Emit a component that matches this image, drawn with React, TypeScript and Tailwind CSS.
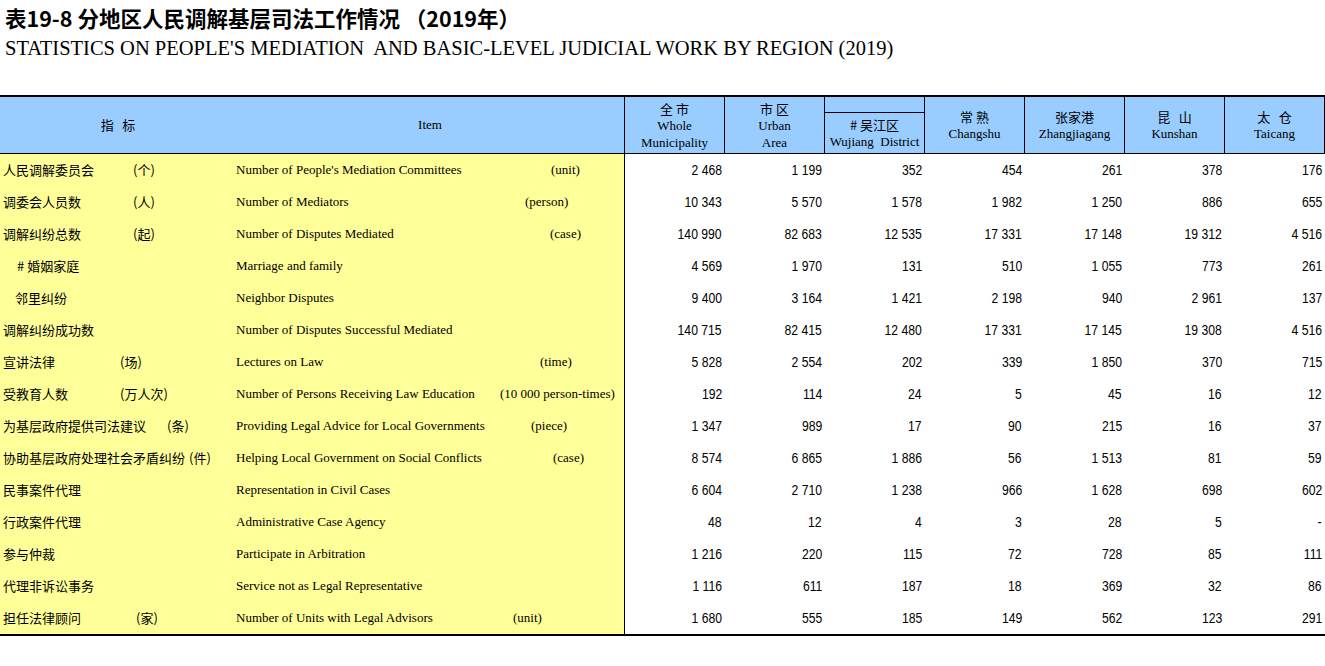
import React from 'react';

type Row = {
    cn: string;
    cnUnit?: string;
    cnW?: string;
    indent?: string;
    en: string;
    enUnit?: string;
    enW?: string;
    values: string[];
};

const rows: Row[] = [
    { cn: '人民调解委员会', cnUnit: '(个)', cnW: 'w-[130px]', en: "Number of People's Mediation Committees", enUnit: '(unit)', enW: 'w-[315px]', values: ['2 468', '1 199', '352', '454', '261', '378', '176'] },
    { cn: '调委会人员数', cnUnit: '(人)', cnW: 'w-[130px]', en: 'Number of Mediators', enUnit: '(person)', enW: 'w-[289px]', values: ['10 343', '5 570', '1 578', '1 982', '1 250', '886', '655'] },
    { cn: '调解纠纷总数', cnUnit: '(起)', cnW: 'w-[130px]', en: 'Number of Disputes Mediated', enUnit: '(case)', enW: 'w-[314px]', values: ['140 990', '82 683', '12 535', '17 331', '17 148', '19 312', '4 516'] },
    { cn: '# 婚姻家庭', indent: 'pl-[17px]', en: 'Marriage and family', values: ['4 569', '1 970', '131', '510', '1 055', '773', '261'] },
    { cn: '邻里纠纷', indent: 'pl-[15px]', en: 'Neighbor Disputes', values: ['9 400', '3 164', '1 421', '2 198', '940', '2 961', '137'] },
    { cn: '调解纠纷成功数', en: 'Number of Disputes Successful Mediated', values: ['140 715', '82 415', '12 480', '17 331', '17 145', '19 308', '4 516'] },
    { cn: '宣讲法律', cnUnit: '(场)', cnW: 'w-[117px]', en: 'Lectures on Law', enUnit: '(time)', enW: 'w-[304px]', values: ['5 828', '2 554', '202', '339', '1 850', '370', '715'] },
    { cn: '受教育人数', cnUnit: '(万人次)', cnW: 'w-[117px]', en: 'Number of Persons Receiving Law Education', enUnit: '(10 000 person-times)', enW: 'w-[264px]', values: ['192', '114', '24', '5', '45', '16', '12'] },
    { cn: '为基层政府提供司法建议', cnUnit: '(条)', cnW: 'w-[164px]', en: 'Providing Legal Advice for Local Governments', enUnit: '(piece)', enW: 'w-[295px]', values: ['1 347', '989', '17', '90', '215', '16', '37'] },
    { cn: '协助基层政府处理社会矛盾纠纷', cnUnit: '(件)', cnW: 'w-[186px]', en: 'Helping Local Government on Social Conflicts', enUnit: '(case)', enW: 'w-[317px]', values: ['8 574', '6 865', '1 886', '56', '1 513', '81', '59'] },
    { cn: '民事案件代理', en: 'Representation in Civil Cases', values: ['6 604', '2 710', '1 238', '966', '1 628', '698', '602'] },
    { cn: '行政案件代理', en: 'Administrative Case Agency', values: ['48', '12', '4', '3', '28', '5', '-'] },
    { cn: '参与仲裁', en: 'Participate in Arbitration', values: ['1 216', '220', '115', '72', '728', '85', '111'] },
    { cn: '代理非诉讼事务', en: 'Service not as Legal Representative', values: ['1 116', '611', '187', '18', '369', '32', '86'] },
    { cn: '担任法律顾问', cnUnit: '(家)', cnW: 'w-[133px]', en: 'Number of Units with Legal Advisors', enUnit: '(unit)', enW: 'w-[277px]', values: ['1 680', '555', '185', '149', '562', '123', '291'] },
];

const cjk = "font-['Noto_Sans_CJK_SC',sans-serif]";
const serif = "font-['Liberation_Serif','Noto_Sans_CJK_SC',serif]";
const sans = "font-['Liberation_Sans',sans-serif]";

function HeadCell({ cn, en }: { cn: string; en: string[] }) {
    return (
        <div className="w-[100px] shrink-0 border-r border-black flex flex-col items-center justify-center leading-[17px] text-[13px]">
            <div className={`${cjk} whitespace-pre`}>{cn}</div>
            {en.map(line => (
                <div key={line} className={serif}>{line}</div>
            ))}
        </div>
    );
}

export default function App() {
    return (
        <div className="w-[1325px] h-[666px] bg-white overflow-hidden text-black">
            {/* Titles */}
            <div className={`pl-[5px] pt-[8px] text-[21.5px] leading-[20px] font-bold whitespace-pre ${cjk}`}>
                {'表19-8 分地区人民调解基层司法工作情况 （2019年）'}
            </div>
            <div className={`pl-[5px] mt-[10px] text-[20.5px] leading-[20px] whitespace-pre ${serif}`}>
                {"STATISTICS ON PEOPLE'S MEDIATION  AND BASIC-LEVEL JUDICIAL WORK BY REGION (2019)"}
            </div>

            {/* Table */}
            <div className="mt-[37px] w-[1325px] border-t-2 border-b-2 border-black">
                {/* Header */}
                <div className="flex h-[57px] bg-[#99CCFF] border-b border-black">
                    <div className="w-[625px] shrink-0 flex border-r border-black text-[13px]">
                        <div className={`w-[236px] flex items-center justify-center whitespace-pre ${cjk}`}>{'指   标'}</div>
                        <div className={`flex-1 flex items-center justify-center ${serif}`}>Item</div>
                    </div>
                    <HeadCell cn="全 市" en={['Whole', 'Municipality']} />
                    <HeadCell cn="市 区" en={['Urban', 'Area']} />
                    <div className="w-[100px] shrink-0 border-r border-black flex flex-col">
                        <div className="h-[16px] border-b border-black" />
                        <div className="flex-1 flex flex-col items-center justify-center leading-[17px] text-[13px]">
                            <div className={cjk}># 吴江区</div>
                            <div className={`${serif} whitespace-pre`}>Wujiang  District</div>
                        </div>
                    </div>
                    <HeadCell cn="常 熟" en={['Changshu']} />
                    <HeadCell cn="张家港" en={['Zhangjiagang']} />
                    <HeadCell cn="昆   山" en={['Kunshan']} />
                    <HeadCell cn="太   仓" en={['Taicang']} />
                </div>

                {/* Body */}
                {rows.map(r => (
                    <div key={r.cn} className="flex h-[32px]">
                        <div className="w-[625px] shrink-0 flex items-center bg-[#FFFF99] border-r border-black text-[13px] whitespace-nowrap">
                            <div className={`w-[236px] shrink-0 flex items-center pl-[3px] ${r.indent ?? ''} ${cjk}`}>
                                <span className={`${r.cnW ?? ''} shrink-0`}>{r.cn}</span>
                                {r.cnUnit && <span>{r.cnUnit}</span>}
                            </div>
                            <div className={`flex items-center ${serif}`}>
                                <span className={`${r.enW ?? ''} shrink-0`}>{r.en}</span>
                                {r.enUnit && <span>{r.enUnit}</span>}
                            </div>
                        </div>
                        {r.values.map((v, i) => (
                            <div key={i} className={`w-[100px] shrink-0 flex items-center justify-end pr-[3px] text-[14px] ${sans}`}>
                                <span className="inline-block origin-right scale-x-[0.87] whitespace-pre">{v}</span>
                            </div>
                        ))}
                    </div>
                ))}
            </div>
        </div>
    );
}
